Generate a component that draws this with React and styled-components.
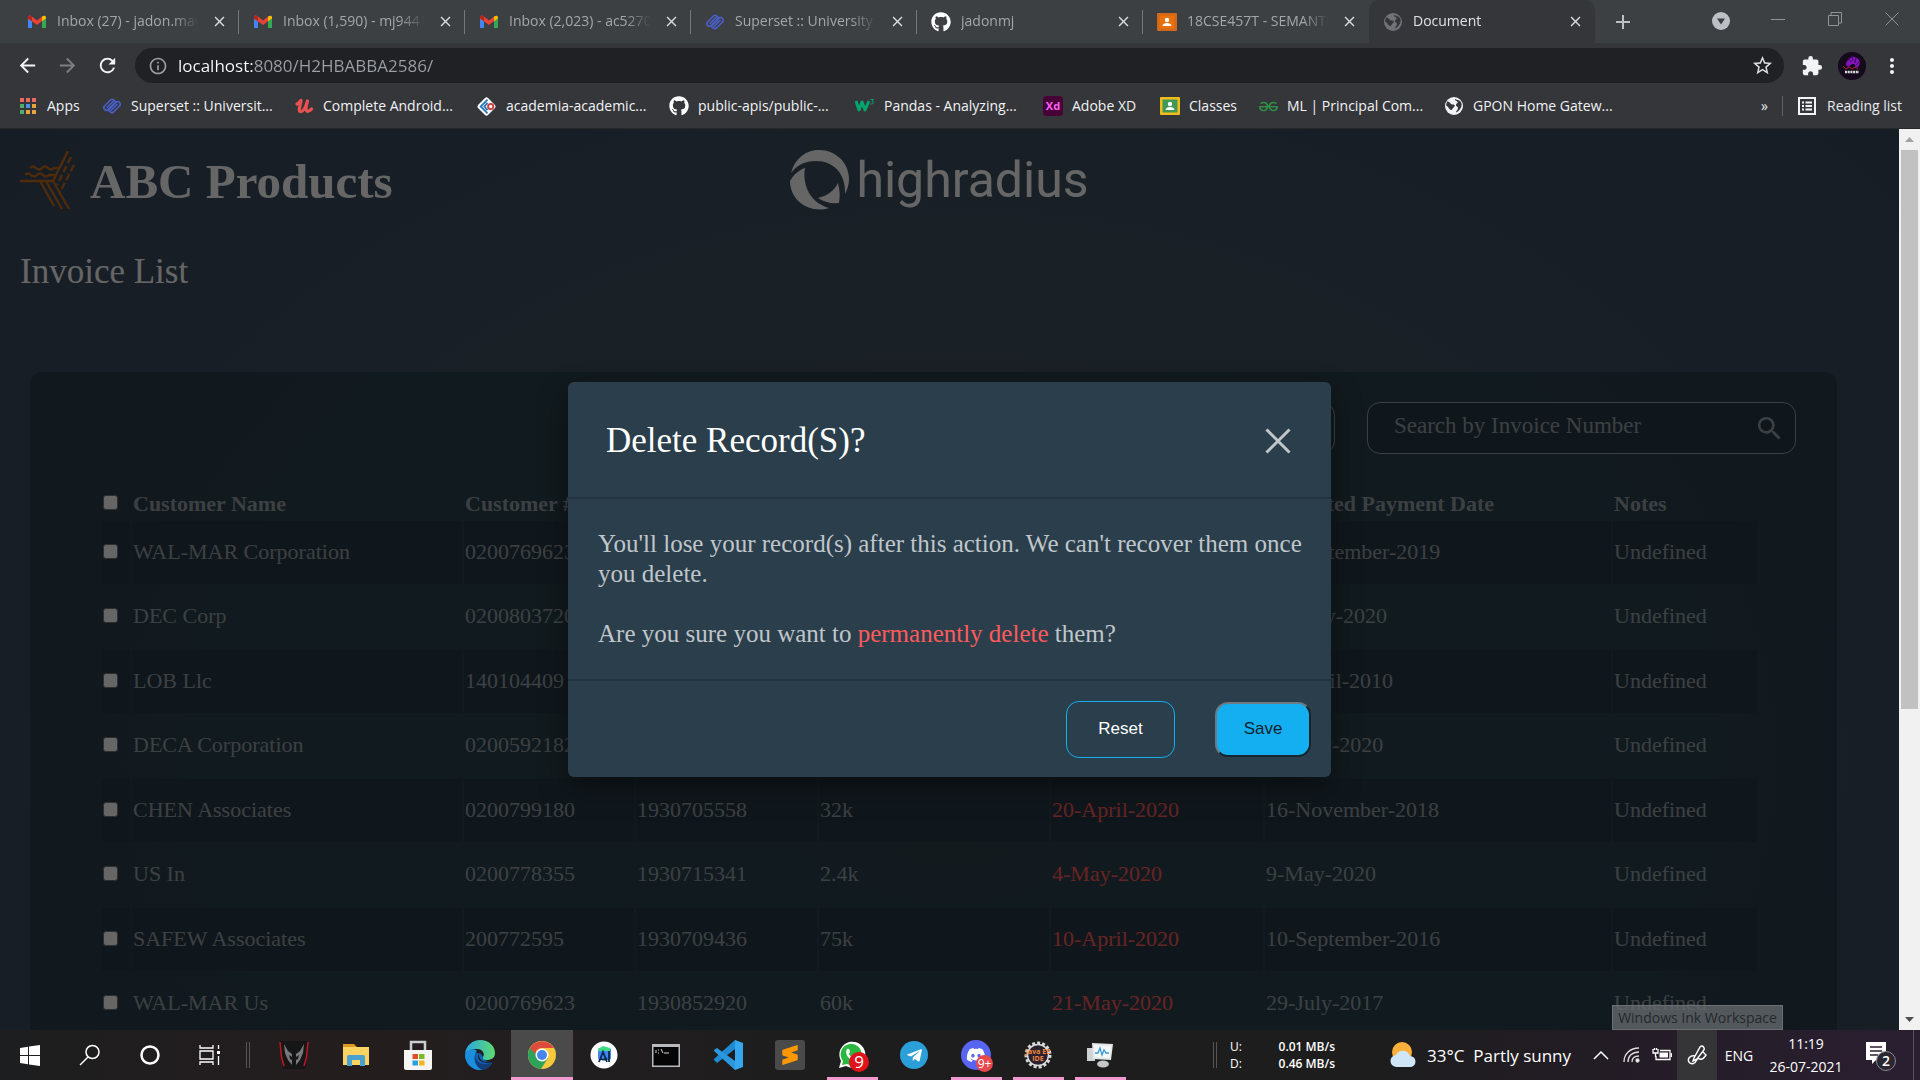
import React from "react";
import styled, { createGlobalStyle, css } from "styled-components";
import { FaGithub, FaDiscord, FaTelegramPlane } from "react-icons/fa";
import { MdExtension, MdStarBorder, MdSearch, MdMoreVert, MdInfoOutline, MdClose, MdArrowBack, MdArrowForward, MdRefresh, MdAdd } from "react-icons/md";
import { SiSublimetext, SiGeeksforgeeks } from "react-icons/si";

const UI = `"Open Sans", "Noto Sans", sans-serif`;
const SERIF = `"Liberation Serif", "Times New Roman", serif`;
const SANS = `"Liberation Sans", Arial, sans-serif`;

const GlobalStyle = createGlobalStyle`
  *, *::before, *::after { box-sizing: border-box; }
  html, body { margin: 0; height: 100%; overflow: hidden; }
  button, input { font: inherit; margin: 0; }
  svg { display: block; flex: none; }
`;

const Screen = styled.div`
  display: flex;
  flex-direction: column;
  height: 100vh;
  overflow: hidden;
  background: #1d1e20;
`;

const bareButton = css`
  display: flex;
  align-items: center;
  justify-content: center;
  padding: 0;
  border: 0;
  background: none;
  color: inherit;
  flex: none;
`;

/* ---------- Browser chrome ---------- */

const Chrome = styled.header`
  flex: none;
  background: #35363a;
  color: #e8eaed;
  font-family: ${UI};
  border-bottom: 1px solid #26282c;
`;

const TabStrip = styled.div`
  display: flex;
  align-items: stretch;
  height: 43px;
  padding-left: 13px;
  background: #3c4043;
`;

const Tab = styled.div`
  display: flex;
  align-items: center;
  gap: 10px;
  flex: 0 1 226px;
  min-width: 0;
  padding: 0 10px 0 14px;
  color: ${(p) => (p.$active ? "#dfe1e5" : "#a3a7ab")};
  background: ${(p) => (p.$active ? "#35363a" : "transparent")};
  border-radius: 10px 10px 0 0;
  position: relative;
  &::after {
    content: "";
    position: absolute;
    right: 0;
    top: 10px;
    height: 24px;
    width: 1px;
    background: ${(p) => (p.$divider ? "#74777b" : "transparent")};
  }
`;

const TabTitle = styled.span`
  flex: 1;
  min-width: 0;
  overflow: hidden;
  white-space: nowrap;
  font-size: 14px;
  line-height: 20px;
  padding-bottom: 1px;
  mask-image: linear-gradient(to right, #000 calc(100% - 26px), transparent);
`;

const TabClose = styled.button`
  ${bareButton}
  width: 20px;
  height: 20px;
  font-size: 17px;
  color: #dadce0;
`;

const NewTab = styled.button`
  ${bareButton}
  width: 56px;
  font-size: 24px;
  color: #bdc1c6;
`;

const WindowControls = styled.div`
  display: flex;
  margin-left: auto;
  color: #8f9396;
`;

const WindowButton = styled.button`
  ${bareButton}
  width: 57px;
  height: ${(p) => (p.$tall ? 42 : 38)}px;
`;

const Toolbar = styled.div`
  display: flex;
  align-items: center;
  height: 45px;
  padding: 0 8px 0 7px;
`;

const ToolButton = styled.button`
  ${bareButton}
  width: 40px;
  height: 36px;
  font-size: 23px;
  color: ${(p) => (p.$dim ? "#7c7f83" : "#f1f3f4")};
`;

const Omnibox = styled.label`
  display: flex;
  align-items: center;
  flex: 1;
  height: 35px;
  margin: 0 8px;
  padding: 0 10px 0 13px;
  gap: 10px;
  border-radius: 18px;
  background: #202124;
  color: #9aa0a6;
`;

const Address = styled.input`
  flex: 1;
  min-width: 0;
  padding: 0;
  border: 0;
  outline: 0;
  font-family: ${UI};
  font-size: 17px;
  line-height: 24px;
  color: transparent;
  background: linear-gradient(to right, #ffffff 75px, #9aa0a6 75px);
  -webkit-background-clip: text;
  background-clip: text;
`;

const Bookmarks = styled.nav`
  display: flex;
  align-items: center;
  height: 40px;
  padding: 0 18px 4px;
`;

const Bookmark = styled.a`
  display: flex;
  align-items: center;
  gap: 9px;
  flex: none;
  width: ${(p) => p.$width}px;
  color: #f1f3f4;
  font-size: 14px;
  line-height: 20px;
  white-space: nowrap;
  text-decoration: none;
`;

const BookmarkEnd = styled.div`
  display: flex;
  align-items: center;
  margin-left: auto;
  gap: 14px;
  font-size: 14px;
  line-height: 20px;
`;

const EndButton = styled.button`
  ${bareButton}
  gap: 10px;
  font-size: 14px;
  line-height: 20px;
`;

const ThinRule = styled.span`
  width: 1px;
  height: 20px;
  background: #5f6368;
`;

/* ---------- Web page ---------- */

const Viewport = styled.div`
  display: flex;
  flex: 1;
  min-height: 0;
  position: relative;
`;

const Page = styled.div`
  flex: 1;
  min-width: 0;
  position: relative;
  overflow: hidden;
  font-family: ${SERIF};
  background: radial-gradient(ellipse 70% 110% at 50% 70%, #46575f 0%, #39495e 100%);
`;

const PageHeader = styled.div`
  display: grid;
  grid-template-columns: 41% 1fr;
  align-items: center;
  height: 82px;
  padding: 20px 0 0 20px;
`;

const Brand = styled.div`
  display: flex;
  align-items: center;
  gap: 15px;
  color: #fff;
`;

const BrandName = styled.h1`
  margin: 0;
  padding-top: 4px;
  font-size: 49px;
  line-height: 56px;
`;

const Partner = styled.div`
  display: flex;
  align-items: center;
  justify-self: start;
  gap: 6px;
  color: #fff;
  font-family: Roboto, "Open Sans", sans-serif;
  font-size: 50px;
  font-weight: 400;
  line-height: 60px;
`;

const PageTitle = styled.h2`
  margin: 41px 0 80px 20px;
  color: #fff;
  font-size: 35px;
  font-weight: 400;
  line-height: 40px;
`;

const Panel = styled.section`
  margin: 0 62px 0 30px;
  padding: 30px 0 40px;
  border-radius: 12px;
  background: rgba(39, 61, 73, 0.8);
`;

const PanelTools = styled.div`
  display: flex;
  justify-content: flex-end;
  gap: 32px;
  padding-right: 41px;
`;

const ToolOutline = styled.button`
  width: 180px;
  height: 52px;
  border: 1px solid #97a1a9;
  border-radius: 13px;
  background: transparent;
  color: #97a1a9;
  font-size: 23px;
`;

const SearchBox = styled.label`
  display: flex;
  align-items: center;
  width: 429px;
  height: 52px;
  padding: 0 10px 0 26px;
  border: 1px solid #97a1a9;
  border-radius: 13px;
  background: #283a46;
  color: #97a1a9;
`;

const SearchInput = styled.input`
  flex: 1;
  min-width: 0;
  padding: 0 0 4px;
  border: 0;
  outline: 0;
  background: none;
  color: #97a1a9;
  font-size: 23px;
  &::placeholder { color: #97a1a9; opacity: 1; }
`;

const Table = styled.table`
  width: calc(100% - 148px);
  margin: 34px 0 0 70px;
  table-layout: fixed;
  border-collapse: separate;
  border-spacing: 2px;
  color: #97a1a9;
  font-size: 22px;
  line-height: 25px;
  text-align: left;
`;

const Col = styled.col`
  width: ${(p) => (p.$width ? `${p.$width}px` : "auto")};
`;

const HeadCell = styled.th`
  height: 29px;
  padding: 1px;
  vertical-align: top;
  white-space: nowrap;
`;

const Row = styled.tr`
  &:nth-child(odd) td { height: 63px; background: #283a46; }
  &:nth-child(even) td { height: 62px; }
`;

const Cell = styled.td`
  padding: 1px 1px 4px;
  white-space: nowrap;
  color: ${(p) => (p.$overdue ? "#ff5b5b" : "#97a1a9")};
`;

const Check = styled.input`
  appearance: none;
  display: block;
  width: 15px;
  height: 15px;
  margin: ${(p) => (p.$head ? "4px" : "0")} 0 0;
  border: 1px solid #767676;
  border-radius: 3px;
  background: #fff;
`;

/* ---------- Dialog ---------- */

const Backdrop = styled.div`
  position: absolute;
  inset: 0;
  display: flex;
  align-items: center;
  justify-content: center;
  background: rgba(0, 0, 0, 0.6);
`;

const Dialog = styled.section`
  width: 763px;
  max-width: 90%;
  border-radius: 6px;
  background: #2a3e4c;
  box-shadow: 0 12px 30px rgba(0, 0, 0, 0.4);
`;

const DialogHead = styled.div`
  display: flex;
  align-items: center;
  justify-content: space-between;
  height: 117px;
  padding: 3px 36px 0 38px;
  border-bottom: 2px solid #21343f;
`;

const DialogTitle = styled.h2`
  margin: 0;
  color: #fff;
  font-size: 35px;
  font-weight: 400;
  line-height: 40px;
`;

const DialogClose = styled.button`
  ${bareButton}
  width: 34px;
  height: 34px;
  color: #c0c6ca;
`;

const DialogBody = styled.div`
  padding: 30px 20px 30px 30px;
  border-bottom: 2px solid #21343f;
  color: #c0c6ca;
  font-size: 25px;
  line-height: 30px;
`;

const Message = styled.p`
  margin: 0;
  & + & { margin-top: 30px; }
`;

const Danger = styled.span`
  color: #ff5b5b;
`;

const DialogFoot = styled.div`
  display: flex;
  align-items: center;
  justify-content: flex-end;
  gap: 40px;
  height: 96px;
  padding: 0 20px 0 0;
  font-family: ${SANS};
`;

const ResetButton = styled.button`
  width: 109px;
  height: 57px;
  border: 1px solid #14aff1;
  border-radius: 13px;
  background: none;
  color: #fff;
  font-size: 17px;
`;

const SaveButton = styled.button`
  width: 96px;
  height: 55px;
  border: 2px solid;
  border-color: #6e7a82 #15242d #15242d #6e7a82;
  border-radius: 13px;
  background: #14aff1;
  color: #15212b;
  font-size: 17px;
`;

const Scrollbar = styled.div`
  display: flex;
  flex-direction: column;
  width: 21px;
  background: #f1f1f1;
`;

const ScrollArrow = styled.button`
  ${bareButton}
  height: 21px;
  color: ${(p) => (p.$dim ? "#a3a3a3" : "#505050")};
`;

const ScrollThumb = styled.div`
  flex: 0 0 62%;
  margin: 0 2px;
  background: #c1c1c1;
`;

const ScrollRest = styled.div`
  flex: 1;
`;

const Tooltip = styled.div`
  position: absolute;
  right: 137px;
  bottom: 0;
  width: 171px;
  padding: 3px 0 2px;
  border: 1px solid #6a6f73;
  background: rgba(105, 110, 114, 0.75);
  color: #24292d;
  font-family: ${UI};
  font-size: 14px;
  line-height: 18px;
  text-align: center;
  white-space: nowrap;
`;

/* ---------- Taskbar ---------- */

const Taskbar = styled.footer`
  display: flex;
  align-items: stretch;
  flex: none;
  height: 50px;
  background: linear-gradient(to right, #1d1e1f 0%, #241d1e 18%, #211e1f 30%, #1d1d1e 45%, #1d1d1e 72%, #231c25 84%, #2a1f31 100%);
  color: #fff;
  font-family: ${UI};
`;

const SystemButton = styled.button`
  ${bareButton}
  width: ${(p) => p.$width || 60}px;
  background: ${(p) => (p.$lit ? "#353437" : "none")};
  font-size: 14px;
`;

const Grip = styled.span`
  align-self: center;
  width: 4px;
  height: 26px;
  margin: 0 13px 0 6px;
  border: solid #555;
  border-width: 0 1px;
`;

const AppButton = styled.button`
  ${bareButton}
  width: 62px;
  padding-top: ${(p) => (p.$active ? "3px" : "0")};
  background: ${(p) => (p.$active ? "#4a4a4b" : "none")};
  border-bottom: ${(p) => (p.$active ? "3px solid #f29ad0" : "0")};
  ${(p) =>
    p.$open &&
    css`
      background: linear-gradient(#f29ad0, #f29ad0) center bottom / 51px 3px no-repeat;
    `}
`;

const Tray = styled.div`
  display: flex;
  margin-left: auto;
`;

const NetSpeed = styled.dl`
  display: grid;
  grid-template-columns: 30px 75px;
  align-content: center;
  width: 155px;
  margin: 0;
  font-size: 12px;
  line-height: 17px;
  font-weight: 600;
`;

const NetName = styled.dt`
  font-weight: 400;
`;

const NetValue = styled.dd`
  margin: 0;
  text-align: right;
`;

const Weather = styled.button`
  ${bareButton}
  justify-content: flex-start;
  width: 200px;
  gap: 10px;
  padding-left: 4px;
  font-size: 17px;
  white-space: pre;
`;

const Clock = styled.button`
  ${bareButton}
  flex-direction: column;
  width: 90px;
  font-size: 14px;
  line-height: 23px;
`;

const TrayEdge = styled.span`
  width: 1px;
  margin: 0 6px 0 2px;
  background: #57505c;
`;

/* ---------- Drawings ---------- */

const Gmail = () => (
  <svg width="20" height="20" viewBox="0 0 20 20">
    <path d="M1 5v11h4V9z" fill="#4285f4" />
    <path d="M19 5v11h-4V9z" fill="#34a853" />
    <path d="M1 5.5C1 3.5 3 3 4.500 4.200L10 8.500l5.500-4.300v4.500L10 13 5 9.200 1 7z" fill="#ea4335" />
    <path d="M1 5.500C1 3.500 3 3 5 4.500v4.700L1 6.500z" fill="#b3261e" />
    <path d="M19 5.500C19 3.500 17 3 15 4.500v4.700l4-2.700z" fill="#fbbc04" />
  </svg>
);

const Superset = () => (
  <svg width="20" height="20" viewBox="0 0 20 20" fill="none" stroke="#4a5fc8" strokeWidth="1.600" strokeLinecap="round" strokeLinejoin="round">
    <path d="M7 13.500l-3 1q-3-1-2-4L8.500 4q2-1.500 3 0M5 11.500L11 5.500M6.500 13L13 6.500q1-1.500-1.500-2.500" />
    <path d="M13 6.500l3-1q3 1 2 4L11.500 16q-2 1.500-3 0M15 8.500L9 14.500M13.500 7L7 13.500q-1 1.500 1.500 2.500" />
  </svg>
);

const Classroom = ({ frame, board }) => (
  <svg width="20" height="20" viewBox="0 0 20 20">
    <rect y="1" width="20" height="18" rx="1" fill={frame} />
    <rect x="2.500" y="3.500" width="15" height="13" fill={board} />
    <circle cx="10" cy="8" r="2.200" fill="#fff" />
    <path d="M5.500 14c0-4 9-4 9 0z" fill="#fff" />
  </svg>
);

const Globe = ({ color, land }) => (
  <svg width="20" height="20" viewBox="0 0 20 20">
    <circle cx="10" cy="10" r="9" fill={color} />
    <path d="M3 5.500c3-.5 3 3 6 3 2 0 2.500 2 .5 3-1.500.8-.5 2-2 2.500C5 14 5 11 2 9.500zM11 3c1.500 1 4 .5 5.500 2.500 1.500 2 1.500 4 .5 6-1 2-3 4.500-5 5 0-2 2-2.500 2-4.500s-2-1-2-3 2.500-1.500 1.500-3S10.500 4.500 11 3z" fill={land} />
  </svg>
);

const AppsGrid = () => (
  <svg width="20" height="20" viewBox="0 0 20 20">
    {["#ea6a5e", "#ea6a5e", "#ea6a5e", "#4fae6b", "#4a90e8", "#e8a33b", "#4fae6b", "#e8a33b", "#e8a33b"].map((c, i) => (
      <rect key={i} x={2 + (i % 3) * 6} y={2 + Math.floor(i / 3) * 6} width="4" height="4" fill={c} />
    ))}
  </svg>
);

const Udemy = () => (
  <svg width="20" height="20" viewBox="0 0 20 20" fill="none" stroke="#ea5252" strokeWidth="3.200" strokeLinecap="round" strokeLinejoin="round">
    <path d="M3 8c2-1 3-3 4-3.500C7 8 3.500 15 6.500 15.500S12 10 13.500 5c-1 4-2.500 9-.5 10.200 1.500.8 3-.7 4.500-2.200" />
  </svg>
);

const Academia = () => (
  <svg width="21" height="21" viewBox="0 0 20 20">
    <rect x="3.300" y="3.300" width="13.400" height="13.400" rx="2" transform="rotate(45 10 10)" fill="#fff" />
    <path d="M11 3.500L4.500 10l6.500 6.500M11 6.500L8 10l3 3.500" fill="none" stroke="#2b7bb9" strokeWidth="1.800" />
    <circle cx="14" cy="10" r="2.500" fill="none" stroke="#d23b3b" strokeWidth="1.800" />
  </svg>
);

const W3 = () => (
  <svg width="20" height="20" viewBox="0 0 20 20" fill="none" stroke="#04a56d" strokeLinejoin="round">
    <path d="M1 5l3 9 3-8 3 8 4-9" strokeWidth="3" />
    <path d="M15.500 3.500h3l-1.500 2c2 0 2 3-1.500 2.500" strokeWidth="1" />
  </svg>
);

const XdBox = styled.span`
  display: flex;
  align-items: center;
  justify-content: center;
  width: 20px;
  height: 20px;
  border-radius: 4px;
  background: #470137;
  color: #ff61f6;
  font-size: 11px;
  font-weight: 700;
`;

const Avatar = () => (
  <svg width="28" height="28" viewBox="0 0 28 28">
    <circle cx="14" cy="14" r="14" fill="#150a1c" />
    <path d="M8 13c0-4 3-7 7-8l-1-1 5 2c3 2 4 6 1 9l-3 1c1-3 0-4-2-4s-3 2-5 3z" fill="#8213bd" />
    <path d="M10 6l3 4M14 4l1 5M18 6l-1 5M21 10l-3 3" stroke="#3d0a5c" />
    <path d="M5 14l3 3 3-2 3 2 3-2 3 2" stroke="#b01c38" fill="none" />
    <path d="M7 20h14" stroke="#ddd" strokeWidth="2.500" strokeDasharray="2 .7" />
  </svg>
);

const AbcLogo = () => (
  <svg width="55" height="59" viewBox="0 0 55 59" fill="none" stroke="#c46c1c" strokeWidth="2.400">
    <path d="M48 0L33 30H0M33 30l16 28M26 30l16 28M20 30l14 25" />
    <path d="M10 17q3-3 6 0t6 0 6 0 6 0h5M5 24q3-3 6 0t6 0 6 0 6 0h6" />
    <path d="M51 6L37 34M54 14L40 41" strokeDasharray="7 3" />
  </svg>
);

const RadiusLogo = () => (
  <svg width="60" height="60" viewBox="0 0 60 60" fill="#fff">
    <path d="M1 23C5 8 16 0 29 0c17 0 30 13 30 29 0 6-2 11-4 15C56 24 44 11 26 11 15 11 7 15 1 23z" />
    <path d="M15 18c-3 18 6 35 24 40-3 1-6 1.500-9 1.500C13 59.500 0 47 0 31c4-7 9-11 15-13z" />
    <path d="M48 33c2 7 2 14 1 20-8 1-15-1-21-5 9-2 16-7 20-15z" />
  </svg>
);

const Cross = () => (
  <svg width="26" height="26" viewBox="0 0 26 26" stroke="currentColor" strokeWidth="3">
    <path d="M1.500 1.500l23 23M24.500 1.500l-23 23" />
  </svg>
);

const Triangle = ({ up }) => (
  <svg width="9" height="5" viewBox="0 0 9 5" fill="currentColor">
    <path d={up ? "M0 5h9L4.500 0z" : "M0 0h9L4.500 5z"} />
  </svg>
);

const Windows = () => (
  <svg width="20" height="21" viewBox="0 0 20 21" fill="#fff">
    <path d="M0 3l8-1.200V10H0zM9 1.600L20 0v10H9zM0 11h8v8.200L0 18zM9 11h11v10L9 19.400z" />
  </svg>
);

const TaskSearch = () => (
  <svg width="22" height="22" viewBox="0 0 22 22" fill="none" stroke="#fff" strokeWidth="1.500">
    <circle cx="13.500" cy="8" r="6.500" />
    <path d="M9 13l-8 8" />
  </svg>
);

const Cortana = () => (
  <svg width="22" height="22" viewBox="0 0 22 22" fill="none" stroke="#fff" strokeWidth="2.500">
    <circle cx="11" cy="11" r="8.500" />
  </svg>
);

const TaskView = () => (
  <svg width="22" height="20" viewBox="0 0 22 20" fill="none" stroke="#fff" strokeWidth="1.300">
    <path d="M1 0v3h13V0M1 20v-3h13v3M1 6h13v8H1zM19.500 0v4M19.500 11v9" />
    <path d="M19.500 6v3" strokeWidth="3" />
  </svg>
);

const Predator = () => (
  <svg width="30" height="30" viewBox="0 0 30 30">
    <path d="M1 1h28l-2 28H4z" fill="#161617" />
    <path d="M1 2l1.500 15L5 26M29 2l-1.500 15L25 26" stroke="#c2161f" strokeWidth="1.500" fill="none" />
    <path d="M5 4l4 7 4 3v3l-3-2 1 4 2 1v5L9 20 6 13zM25 4l-4 7-4 3v3l3-2-1 4-2 1v5l4-5 3-7z" fill="#77797c" />
  </svg>
);

const Explorer = () => (
  <svg width="28" height="26" viewBox="0 0 28 26">
    <path d="M1 2h11l3 3h-1v5H1z" fill="#d99a1f" />
    <path d="M1 5h26v18H1z" fill="#fbd362" />
    <path d="M5 24v-9q0-2 2-2h14q2 0 2 2v9h-5v-6h-8v6z" fill="#4ba0d2" />
  </svg>
);

const Store = () => (
  <svg width="30" height="31" viewBox="0 0 30 31">
    <path d="M8 12V2h14v10" fill="none" stroke="#c9ccd0" strokeWidth="2.500" />
    <path d="M1 10h28v18q0 2-2 2H3q-2 0-2-2z" fill="#f5f5f5" />
    <path d="M9.500 14H15v5H9.500z" fill="#e04f2a" />
    <path d="M16 14h5.500v5H16z" fill="#7cb928" />
    <path d="M9.500 20.500H15v5H9.500z" fill="#2a9fe0" />
    <path d="M16 20.500h5.500v5H16z" fill="#f2b71e" />
  </svg>
);

const Edge = () => (
  <svg width="30" height="30" viewBox="0 0 30 30">
    <defs>
      <linearGradient id="edgeTop" x1="0" x2="1">
        <stop offset="0" stopColor="#29a5e6" />
        <stop offset="1" stopColor="#5edb6e" />
      </linearGradient>
    </defs>
    <path d="M0 14a15 15 0 0 0 15 16c5 0 9-2 12-7l-6-2-6-8z" fill="#0f63b8" />
    <path d="M0 14C1 5 8 0 15 0c9 0 15 6 15 13 0 5-4 7-8 7-3 0-5-1-4-3 2-3 0-8-6-8C6 9 2 11 0 14z" fill="url(#edgeTop)" />
    <path d="M11 12c-2 6 1 12 9 12 3 0 6-1 7-2-2 5-7 8-12 8C8 28 6 19 11 12z" fill="#123f7a" />
    <path d="M12 11c-5 6-2 16 5 19C8 31 0 24 0 14c3-5 9-6 12-3z" fill="#1a8fe0" />
    <path d="M15 12c-3 5 1 10 7 10l5-1c-1 3-13 3-14-4 0-2 1-4 2-5z" fill="#1d1e20" />
  </svg>
);

const ChromeIcon = () => (
  <svg width="28" height="28" viewBox="0 0 28 28">
    <circle cx="14" cy="14" r="14" fill="#f8c83c" />
    <path d="M1.900 7A14 14 0 0 0 13 28l7-11-6-3z" fill="#2da25a" />
    <path d="M2 7A14 14 0 0 1 26 7H14a7 7 0 0 0-7 6z" fill="#dd4b3e" />
    <circle cx="14" cy="14" r="6.500" fill="#fff" />
    <circle cx="14" cy="14" r="5" fill="#4684ee" />
  </svg>
);

const AndroidStudio = () => (
  <svg width="28" height="28" viewBox="0 0 28 28">
    <circle cx="14" cy="14" r="13.500" fill="#fff" />
    <rect x="8" y="7" width="13" height="12" rx="2" fill="#4285f4" />
    <path d="M8 8l5-3 7 2v3H8z" fill="#3ddc84" />
    <path d="M9 21l4-10 4 10M11 18c2 1 4 1 6-1M19 10v11" fill="none" stroke="#0b2a4a" strokeWidth="1.800" />
  </svg>
);

const Terminal = () => (
  <svg width="28" height="23" viewBox="0 0 28 23">
    <rect width="28" height="23" fill="#b8bbbe" />
    <rect x="1.500" y="3" width="25" height="18.500" fill="#050505" />
    <path d="M4 6v3M6 6h1M6 9h1M9 5l2 4M12 9h5" stroke="#d8d8d8" strokeWidth="1" />
  </svg>
);

const VsCode = () => (
  <svg width="30" height="30" viewBox="0 0 30 30">
    <path d="M22 0l8 3v24l-8 3z" fill="#35a7ee" />
    <path d="M22 0v9L4 23l-3-3v-1z" fill="#1f8ad2" />
    <path d="M22 30v-9L4 8l-3 2v1z" fill="#2c98e0" />
  </svg>
);

const SublimeTile = styled.span`
  display: flex;
  align-items: center;
  justify-content: center;
  width: 30px;
  height: 30px;
  border-radius: 3px;
  background: #4a4a4a;
  color: #ff9800;
  font-size: 20px;
`;

const RoundIcon = styled.span`
  display: flex;
  align-items: center;
  justify-content: center;
  position: relative;
  width: ${(p) => p.$size || 30}px;
  height: ${(p) => p.$size || 30}px;
  border-radius: 50%;
  background: ${(p) => p.$color};
  color: #fff;
  font-size: 20px;
`;

const Badge = styled.span`
  position: absolute;
  right: -2px;
  bottom: -2px;
  width: ${(p) => p.$size}px;
  height: ${(p) => p.$size}px;
  border-radius: 50%;
  background: ${(p) => p.$color};
  color: #fff;
  font-size: ${(p) => p.$font}px;
  line-height: ${(p) => p.$size}px;
  text-align: center;
`;

const Telegram = () => (
  <RoundIcon $size={28} $color="#2a9fd8">
    <FaTelegramPlane size={17} />
  </RoundIcon>
);

const WhatsApp = () => (
  <RoundIcon $color="transparent">
    <svg width="28" height="28" viewBox="0 0 28 28">
      <path d="M1 27l2-7A13 13 0 1 1 8 25z" fill="#fff" />
      <path d="M4 24l1-4A10.500 10.500 0 1 1 9 23z" fill="#2cb742" />
      <path d="M9 8c2-1 3 1 3 3l-1 2c1 2 2 3 4 4l2-2 4 2c-1 5-6 4-9 1-3-2-5-7-3-10z" fill="#fff" />
    </svg>
    <Badge $size={20} $font={17} $color="#e0121a">9</Badge>
  </RoundIcon>
);

const Discord = () => (
  <RoundIcon $color="#5865f2">
    <FaDiscord />
    <Badge $size={17} $font={12} $color="#e8494f">9+</Badge>
  </RoundIcon>
);

const Eclipse = () => (
  <svg width="28" height="28" viewBox="0 0 28 28">
    <circle cx="14" cy="14" r="12" fill="none" stroke="#dadada" strokeWidth="3" strokeDasharray="3 2.030" />
    <circle cx="14" cy="14" r="10.500" fill="#2a2030" stroke="#dadada" strokeWidth="1.500" />
    <text x="14" y="13" fontSize="7" fontWeight="700" textAnchor="middle" fill="#f08a3c" fontFamily="Open Sans, sans-serif">Java EE</text>
    <text x="14" y="20" fontSize="7" fontWeight="700" textAnchor="middle" fill="#f08a3c" fontFamily="Open Sans, sans-serif">IDE</text>
  </svg>
);

const Monitor = () => (
  <svg width="28" height="26" viewBox="0 0 28 26">
    <path d="M1 6h8v13H1z" fill="#cfd2d4" />
    <path d="M6 1l21 1-2 16-18-1z" fill="#e4e7e8" />
    <path d="M8 3l17 1-1.500 12L9 15z" fill="#f4f8fa" />
    <path d="M9 11h3l2-5 2 7 2-5 2 3h3" fill="none" stroke="#3b9ad0" strokeWidth="1.300" />
    <ellipse cx="17" cy="22" rx="6" ry="3.500" fill="#c4c7c9" />
  </svg>
);

const WeatherIcon = () => (
  <svg width="28" height="28" viewBox="0 0 28 28">
    <circle cx="13" cy="11" r="10" fill="#fbb03b" />
    <path d="M8 26a6 6 0 0 1-1-12 7.500 7.500 0 0 1 14 1 5.500 5.500 0 0 1 0 11z" fill="#cfe6f8" />
  </svg>
);

const Chevron = () => (
  <svg width="16" height="9" viewBox="0 0 16 9" fill="none" stroke="#fff" strokeWidth="1.500">
    <path d="M1 8l7-7 7 7" />
  </svg>
);

const Wifi = () => (
  <svg width="18" height="16" viewBox="0 0 18 16" fill="none" stroke="#ddd" strokeWidth="1.300">
    <path d="M1 15C1 7 7 1 16 1M5 15C5 9 9 5 16 5M9 15c0-4 3-6 7-6" />
    <circle cx="14.500" cy="13.500" r="1.500" fill="#fff" />
  </svg>
);

const Battery = () => (
  <svg width="20" height="14" viewBox="0 0 20 14" fill="none" stroke="#fff" strokeWidth="1.300">
    <path d="M8 2.500h10v9H4V8M1 1v4h5V1M2.500 0v2M4.500 0v2M3.500 5v4" />
    <rect x="7.500" y="4.500" width="8.500" height="5" fill="#fff" stroke="none" />
    <path d="M19.300 5v4" />
  </svg>
);

const Pen = () => (
  <svg width="21" height="20" viewBox="0 0 21 20" fill="none" stroke="#fff" strokeWidth="1.400">
    <path d="M7 13L13 2q2-2 3.500 0t0 3.500L10 14l-4 2zM8 11C3 10 0 14 2 17s6 2 7-1c1-2 2-3 4-2s4-1 6-4l-3-3" />
  </svg>
);

const Notify = () => (
  <svg width="32" height="32" viewBox="0 0 32 32">
    <path d="M1 3h20v18H11l-4 4v-4H1z" fill="#fff" />
    <path d="M5 8h12M5 12h12M5 16h8" stroke="#2a1f31" strokeWidth="1.500" />
    <circle cx="21" cy="22" r="9.500" fill="#2b2730" stroke="#8b8790" />
    <text x="21" y="27" fontSize="14" fontWeight="600" textAnchor="middle" fill="#fff" fontFamily="Open Sans, sans-serif">2</text>
  </svg>
);

/* ---------- Data ---------- */

const tabs = [
  { icon: <Gmail />, title: "Inbox (27) - jadon.mayur" },
  { icon: <Gmail />, title: "Inbox (1,590) - mj9441@" },
  { icon: <Gmail />, title: "Inbox (2,023) - ac5270@" },
  { icon: <Superset />, title: "Superset :: University Pl" },
  { icon: <FaGithub size={20} color="#fff" />, title: "jadonmj" },
  { icon: <Classroom frame="#d2691a" board="#e8710a" />, title: "18CSE457T - SEMANTIC" },
  { icon: <Globe color="#6f7378" land="#35363a" />, title: "Document", active: true },
];

const bookmarks = [
  { icon: <AppsGrid />, label: "Apps", width: 84 },
  { icon: <Superset />, label: "Superset :: Universit...", width: 192 },
  { icon: <Udemy />, label: "Complete Android...", width: 182 },
  { icon: <Academia />, label: "academia-academic...", width: 193 },
  { icon: <FaGithub size={20} color="#fff" />, label: "public-apis/public-...", width: 186 },
  { icon: <W3 />, label: "Pandas - Analyzing...", width: 188 },
  { icon: <XdBox>Xd</XdBox>, label: "Adobe XD", width: 117 },
  { icon: <Classroom frame="#f2bc1b" board="#3f9a55" />, label: "Classes", width: 99 },
  { icon: <SiGeeksforgeeks size={19} color="#2f8d46" />, label: "ML | Principal Com...", width: 185 },
  { icon: <Globe color="#f1f3f4" land="#35363a" />, label: "GPON Home Gatew...", width: 180 },
];

const columns = [
  { label: "Customer Name", width: 330 },
  { label: "Customer #", width: 170 },
  { label: "Invoice #", width: 181 },
  { label: "Invoice Amount", width: 230 },
  { label: "Due Date", width: 212 },
  { label: "Predicted Payment Date", width: 0 },
  { label: "Notes", width: 144 },
];

const invoices = [
  ["WAL-MAR Corporation", "0200769623", "1930728364", "54k", "12-May-2020", "10-September-2019"],
  ["DEC Corp", "0200803720", "1930714029", "18k", "6-April-2020", "10-May-2020"],
  ["LOB Llc", "140104409", "1930711846", "9.1k", "14-April-2020", "20-April-2010"],
  ["DECA Corporation", "0200592182", "1930708271", "41k", "2-May-2020", "12-July-2020"],
  ["CHEN Associates", "0200799180", "1930705558", "32k", "20-April-2020", "16-November-2018"],
  ["US In", "0200778355", "1930715341", "2.4k", "4-May-2020", "9-May-2020"],
  ["SAFEW Associates", "200772595", "1930709436", "75k", "10-April-2020", "10-September-2016"],
  ["WAL-MAR Us", "0200769623", "1930852920", "60k", "21-May-2020", "29-July-2017"],
];

const apps = [
  { name: "PredatorSense", icon: <Predator /> },
  { name: "File Explorer", icon: <Explorer /> },
  { name: "Store", icon: <Store /> },
  { name: "Edge", icon: <Edge /> },
  { name: "Chrome", icon: <ChromeIcon />, active: true },
  { name: "Android Studio", icon: <AndroidStudio /> },
  { name: "Terminal", icon: <Terminal /> },
  { name: "Visual Studio Code", icon: <VsCode /> },
  { name: "Sublime Text", icon: <SublimeTile><SiSublimetext /></SublimeTile> },
  { name: "WhatsApp", icon: <WhatsApp />, open: true },
  { name: "Telegram", icon: <Telegram /> },
  { name: "Discord", icon: <Discord />, open: true },
  { name: "Eclipse", icon: <Eclipse />, open: true },
  { name: "Resource Monitor", icon: <Monitor />, open: true },
];

/* ---------- Sections ---------- */

function BrowserChrome() {
  return (
    <Chrome>
      <TabStrip role="tablist">
        {tabs.map((t, i) => (
          <Tab key={i} role="tab" aria-selected={!!t.active} $active={t.active} $divider={i < 5}>
            {t.icon}
            <TabTitle>{t.title}</TabTitle>
            <TabClose aria-label="Close tab"><MdClose /></TabClose>
          </Tab>
        ))}
        <NewTab aria-label="New tab"><MdAdd /></NewTab>
        <WindowControls>
          <WindowButton $tall aria-label="Search tabs">
            <svg width="18" height="18" viewBox="0 0 18 18">
              <circle cx="9" cy="9" r="9" fill="#bdc1c6" />
              <path d="M5 6.500h8L9 12.500z" fill="#3c4043" />
            </svg>
          </WindowButton>
          <WindowButton aria-label="Minimise">
            <svg width="14" height="14" viewBox="0 0 14 14" stroke="currentColor"><path d="M0 7.500h14" /></svg>
          </WindowButton>
          <WindowButton aria-label="Restore">
            <svg width="14" height="14" viewBox="0 0 14 14" stroke="currentColor" fill="none"><path d="M.5 3.500h10v10H.5zM3 3V.5h10.500V11H11" /></svg>
          </WindowButton>
          <WindowButton aria-label="Close window">
            <svg width="14" height="14" viewBox="0 0 14 14" stroke="currentColor"><path d="M.5.5l13 13M13.500.5l-13 13" /></svg>
          </WindowButton>
        </WindowControls>
      </TabStrip>
      <Toolbar>
        <ToolButton aria-label="Back"><MdArrowBack /></ToolButton>
        <ToolButton aria-label="Forward" $dim><MdArrowForward /></ToolButton>
        <ToolButton aria-label="Reload"><MdRefresh /></ToolButton>
        <Omnibox>
          <MdInfoOutline size={20} />
          <Address aria-label="Address" defaultValue="localhost:8080/H2HBABBA2586/" />
          <MdStarBorder size={23} color="#dadce0" />
        </Omnibox>
        <ToolButton aria-label="Extensions"><MdExtension size={22} /></ToolButton>
        <ToolButton aria-label="Profile"><Avatar /></ToolButton>
        <ToolButton aria-label="Menu"><MdMoreVert size={24} /></ToolButton>
      </Toolbar>
      <Bookmarks>
        {bookmarks.map((b) => (
          <Bookmark key={b.label} href="#" $width={b.width}>
            {b.icon}
            {b.label}
          </Bookmark>
        ))}
        <BookmarkEnd>
          <EndButton aria-label="More bookmarks">»</EndButton>
          <ThinRule />
          <EndButton>
            <svg width="20" height="20" viewBox="0 0 20 20" fill="none" stroke="#f1f3f4" strokeWidth="2">
              <path d="M2 2h16v16H2zM5 6.500h2M8.500 6.500H15M5 10h2M8.500 10H15M5 13.500h2M8.500 13.500H15" />
            </svg>
            Reading list
          </EndButton>
        </BookmarkEnd>
      </Bookmarks>
    </Chrome>
  );
}

function InvoicePage() {
  return (
    <>
      <PageHeader>
        <Brand>
          <AbcLogo />
          <BrandName>ABC Products</BrandName>
        </Brand>
        <Partner>
          <RadiusLogo />
          highradius
        </Partner>
      </PageHeader>
      <PageTitle>Invoice List</PageTitle>
      <Panel>
        <PanelTools>
          <ToolOutline>Delete</ToolOutline>
          <SearchBox>
            <SearchInput type="text" aria-label="Search by Invoice Number" placeholder="Search by Invoice Number" />
            <MdSearch size={31} />
          </SearchBox>
        </PanelTools>
        <Table>
          <colgroup>
            <Col $width={28} />
            {columns.map((c) => <Col key={c.label} $width={c.width} />)}
          </colgroup>
          <thead>
            <tr>
              <HeadCell><Check type="checkbox" aria-label="Select all" $head /></HeadCell>
              {columns.map((c) => <HeadCell key={c.label}>{c.label}</HeadCell>)}
            </tr>
          </thead>
          <tbody>
            {invoices.map((row, r) => (
              <Row key={r}>
                <Cell><Check type="checkbox" aria-label={`Select ${row[0]}`} /></Cell>
                {row.map((value, i) => <Cell key={i} $overdue={i === 4}>{value}</Cell>)}
                <Cell>Undefined</Cell>
              </Row>
            ))}
          </tbody>
        </Table>
      </Panel>
    </>
  );
}

function DeleteDialog() {
  return (
    <Backdrop>
      <Dialog role="dialog" aria-label="Delete records">
        <DialogHead>
          <DialogTitle>Delete Record(S)?</DialogTitle>
          <DialogClose aria-label="Close"><Cross /></DialogClose>
        </DialogHead>
        <DialogBody>
          <Message>You'll lose your record(s) after this action. We can't recover them once you delete.</Message>
          <Message>Are you sure you want to <Danger>permanently delete</Danger> them?</Message>
        </DialogBody>
        <DialogFoot>
          <ResetButton>Reset</ResetButton>
          <SaveButton>Save</SaveButton>
        </DialogFoot>
      </Dialog>
    </Backdrop>
  );
}

function WindowsTaskbar() {
  return (
    <Taskbar>
      <SystemButton aria-label="Start"><Windows /></SystemButton>
      <SystemButton aria-label="Search"><TaskSearch /></SystemButton>
      <SystemButton aria-label="Cortana"><Cortana /></SystemButton>
      <SystemButton aria-label="Task view"><TaskView /></SystemButton>
      <Grip />
      {apps.map((a) => (
        <AppButton key={a.name} aria-label={a.name} $active={a.active} $open={a.open}>{a.icon}</AppButton>
      ))}
      <Tray>
        <Grip />
        <NetSpeed>
          <NetName>U:</NetName>
          <NetValue>0.01 MB/s</NetValue>
          <NetName>D:</NetName>
          <NetValue>0.46 MB/s</NetValue>
        </NetSpeed>
        <Weather><WeatherIcon />{"33°C  Partly sunny"}</Weather>
        <SystemButton $width={32} aria-label="Show hidden icons"><Chevron /></SystemButton>
        <SystemButton $width={30} aria-label="Network"><Wifi /></SystemButton>
        <SystemButton $width={30} aria-label="Battery"><Battery /></SystemButton>
        <SystemButton $width={40} $lit aria-label="Ink workspace"><Pen /></SystemButton>
        <SystemButton $width={44}>ENG</SystemButton>
        <Clock>
          <span>11:19</span>
          <span>26-07-2021</span>
        </Clock>
        <SystemButton $width={60} aria-label="Notifications"><Notify /></SystemButton>
        <TrayEdge />
      </Tray>
    </Taskbar>
  );
}

export default function App() {
  return (
    <Screen>
      <GlobalStyle />
      <BrowserChrome />
      <Viewport>
        <Page>
          <InvoicePage />
          <DeleteDialog />
        </Page>
        <Scrollbar>
          <ScrollArrow $dim aria-label="Scroll up"><Triangle up /></ScrollArrow>
          <ScrollThumb />
          <ScrollRest />
          <ScrollArrow aria-label="Scroll down"><Triangle /></ScrollArrow>
        </Scrollbar>
        <Tooltip role="tooltip">Windows Ink Workspace</Tooltip>
      </Viewport>
      <WindowsTaskbar />
    </Screen>
  );
}
